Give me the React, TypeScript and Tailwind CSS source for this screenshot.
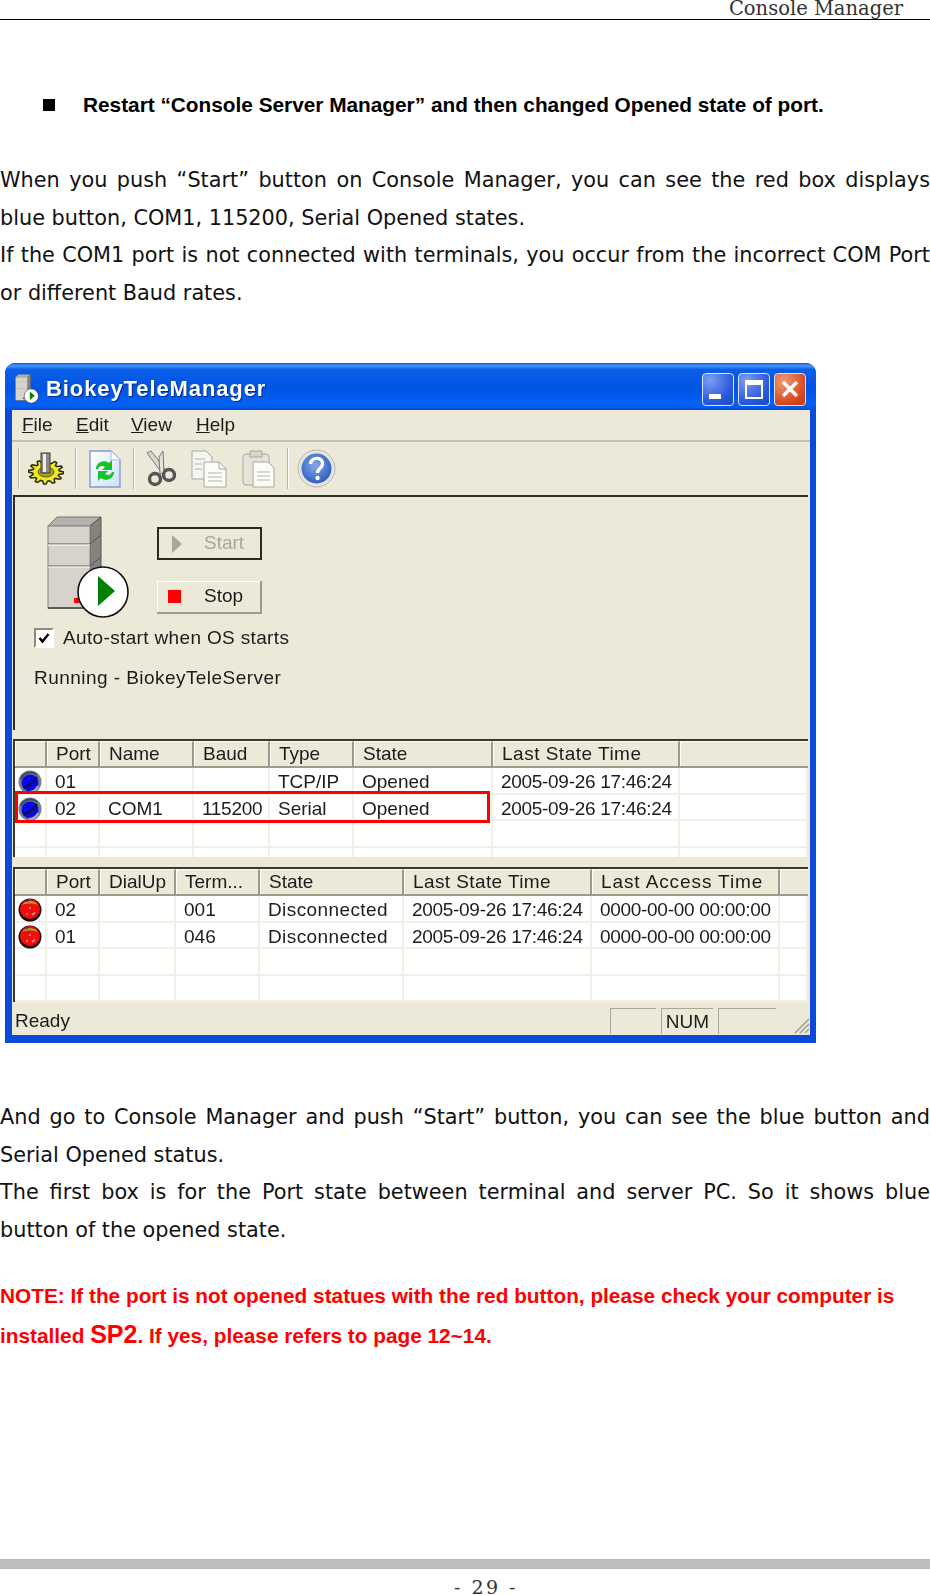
import type { ReactNode } from 'react'

const serif = 'font-["DejaVu_Serif","Liberation_Serif",serif]'
const panelFont = 'font-["Liberation_Sans",sans-serif]'

const ports = [
  { port: '01', name: '', baud: '', type: 'TCP/IP', state: 'Opened', time: '2005-09-26 17:46:24' },
  { port: '02', name: 'COM1', baud: '115200', type: 'Serial', state: 'Opened', time: '2005-09-26 17:46:24' }
]

const terms = [
  { port: '02', term: '001', state: 'Disconnected', last: '2005-09-26 17:46:24', access: '0000-00-00 00:00:00' },
  { port: '01', term: '046', state: 'Disconnected', last: '2005-09-26 17:46:24', access: '0000-00-00 00:00:00' }
]

const portCols = 'grid-cols-[32px_53px_94px_76px_84px_139px_187px_1fr]'
const termCols = 'grid-cols-[32px_53px_76px_84px_144px_188px_188px_1fr]'

// cog outline for the toolbar icon, squashed so it reads as seen from above
const cogPoints = Array.from({ length: 48 }, (_, i) => {
  const a = (i / 48) * Math.PI * 2
  const r = i % 4 < 2 ? 1 : 0.76
  return `${(18 + Math.cos(a) * 17.5 * r).toFixed(1)},${(20 + Math.sin(a) * 12 * r).toFixed(1)}`
}).join(' ')

const Gears = () => (
  <svg width="36" height="33" viewBox="0 0 36 33">
    <polygon points={cogPoints} fill="#f0ea20" stroke="#2c2c10" strokeWidth="1.5" />
    <ellipse cx="18" cy="20" rx="8" ry="5" fill="#a8a018" stroke="#55551a" />
    <rect x="13" y="1" width="9" height="20" fill="#8a8a86" stroke="#3c3c3c" />
    <rect x="15" y="2" width="3" height="18" fill="#ededed" />
  </svg>
)

const RefreshDoc = () => (
  <svg width="32" height="38" viewBox="0 0 32 38">
    <defs>
      <linearGradient id="docFill" x1="0" y1="0" x2="1" y2="1">
        <stop offset="0" stopColor="#ffffff" />
        <stop offset="1" stopColor="#cfe0fa" />
      </linearGradient>
    </defs>
    <path d="M1 1h21l9 9v27H1z" fill="url(#docFill)" stroke="#7d9bd0" strokeWidth="1.4" />
    <path d="M22 1v9h9" fill="#fff" stroke="#a8bce0" />
    <path d="M7 19c0-7 8-10 13-6l3-3v10h-10l3-3c-3-2-6-1-7 2z" fill="#14c428" />
    <path d="M25 22c0 7-8 10-13 6l-3 3V21h10l-3 3c3 2 6 1 7-2z" fill="#14c428" />
  </svg>
)

const Scissors = () => (
  <svg width="30" height="37" viewBox="0 0 30 37">
    <path d="M1 3l15 20 3-4L5 1z" fill="#d8d8d0" stroke="#777" />
    <path d="M17 1l1 22-4 1-1-17z" fill="#e4e4dc" stroke="#777" />
    <circle cx="9" cy="29" r="5.5" fill="none" stroke="#555" strokeWidth="3.4" />
    <circle cx="23" cy="25" r="5.5" fill="none" stroke="#555" strokeWidth="3.4" />
  </svg>
)

const Copy = () => (
  <svg width="36" height="38" viewBox="0 0 36 38">
    <path d="M1 1h14l6 6v22H1z" fill="#f4f4f0" stroke="#a8a8a0" />
    <path d="M13 12h15l7 7v18H13z" fill="#fbfbf8" stroke="#a8a8a0" />
    <path d="M28 12v7h7" fill="none" stroke="#a8a8a0" />
    <path d="M4 9h10M4 14h7M4 19h7M17 23h14M17 27h14M17 31h14" stroke="#b4b4ac" />
  </svg>
)

const Paste = () => (
  <svg width="33" height="38" viewBox="0 0 33 38">
    <rect x="1" y="4" width="26" height="31" rx="3" fill="#e6e4da" stroke="#a8a8a0" />
    <path d="M8 1h12v6H8z" fill="#d8d6cc" stroke="#a8a8a0" />
    <path d="M11 12h15l6 6v19H11z" fill="#fbfbf8" stroke="#a8a8a0" />
    <path d="M15 22h13M15 26h13M15 30h13" stroke="#b4b4ac" />
  </svg>
)

const Help = () => (
  <svg width="39" height="39" viewBox="0 0 39 39">
    <defs>
      <radialGradient id="helpFill" cx="45%" cy="40%" r="60%">
        <stop offset="0" stopColor="#86a8e8" />
        <stop offset="1" stopColor="#2f5fc0" />
      </radialGradient>
    </defs>
    <circle cx="19.5" cy="19.5" r="18.5" fill="#e4e4e0" stroke="#b8b8b0" />
    <circle cx="19.5" cy="19.5" r="15" fill="url(#helpFill)" />
    <path d="M13.5 15c1-8 13-7 12 0 0 4-5 4-5 9" fill="none" stroke="#fff" strokeWidth="3.4" />
    <circle cx="20.5" cy="29" r="2.2" fill="#fff" />
  </svg>
)

const Server = ({ size = 84 }: { size?: number }) => (
  <svg width={size} height={(size * 104) / 84} viewBox="0 0 84 104">
    <polygon points="2,11 11,2 55,2 44,11" fill="#b4b2ac" stroke="#77756e" />
    <polygon points="44,11 55,2 55,76 44,93" fill="#85837e" stroke="#55534e" />
    <rect x="2" y="11" width="42" height="82" fill="#d6d3cb" stroke="#86847d" />
    <path d="M2 29h42M2 51h42M44 29l11-9M44 51l11-9" stroke="#55534e" />
    <path d="M2 30h42M2 52h42" stroke="#fff" />
    <path d="M2 93h42l11-17" fill="none" stroke="#44423c" strokeWidth="1.6" />
    <rect x="28" y="83" width="6" height="5" fill="#ff0000" />
    <circle cx="57" cy="77" r="25" fill="#fff" stroke="#111" strokeWidth="1.6" />
    <polygon points="52,61 69,76 52,91" fill="#008000" />
  </svg>
)

const Orb = ({ color }: { color: 'blue' | 'red' }) =>
  color === 'blue' ? (
    <svg width="24" height="24" viewBox="0 0 24 24">
      <circle cx="12" cy="12" r="11.5" fill="#767e8a" />
      <path d="M3 9a10 10 0 0 1 16-4" fill="none" stroke="#3c4a5a" strokeWidth="2" />
      <circle cx="12" cy="13" r="8.5" fill="#0808e8" />
      <path d="M5 17c6 0 10-4 14-10" fill="none" stroke="#061060" strokeWidth="2.4" />
      <path d="M20 16a10 10 0 0 1-9 6" fill="none" stroke="#aab2b8" strokeWidth="2" />
    </svg>
  ) : (
    <svg width="24" height="24" viewBox="0 0 24 24">
      <circle cx="12" cy="12" r="11.5" fill="#1c0c0c" />
      <circle cx="12" cy="11" r="10" fill="#f40c0c" />
      <path d="M4 7a10 10 0 0 1 16 0c-5-2-11-2-16 0z" fill="#a8a020" />
      <path d="M7 2.5l3-1 1 1.5-3 1z" fill="#3030c0" />
      <circle cx="12" cy="10" r="1.1" fill="#e8a0a0" />
      <circle cx="9" cy="16" r="1" fill="#e8a0a0" />
      <path d="M14 17l3-2.5" stroke="#d8b0b0" strokeWidth="1.6" />
    </svg>
  )

const HeaderCell = ({ children, last }: { children?: ReactNode; last?: boolean }) => (
  <div
    className={`flex h-[25px] items-center border-t border-l border-t-[#fbfaf4] border-l-white bg-[#ece9d8] pb-[2px] pl-[8px] leading-none ${
      last ? '' : 'border-r-2 border-r-[#9d9a8a]'
    }`}
  >
    {children}
  </div>
)

const ToolSep = () => <div className="h-[41px] w-[2px] border-r border-l border-r-white border-l-[#b8b5a6]" />

const Row = ({ cols, cells }: { cols: string; cells: ReactNode[] }) => (
  <div className={`grid h-[26.6px] ${cols} border-b-2 border-b-[#f2f0e4] bg-white`}>
    {cells.map((c, i) => (
      <div
        key={i}
        className={`flex items-center border-r-2 border-r-[#f2f0e4] whitespace-nowrap ${
          i === 0 ? 'justify-center' : 'pl-[8px]'
        }`}
      >
        {c}
      </div>
    ))}
  </div>
)

const Digits = ({ children }: { children: ReactNode }) => <span className="tracking-[-0.3px]">{children}</span>

const CaptionButton = ({ children, close }: { children: ReactNode; close?: boolean }) => (
  <div
    className={`flex h-[33px] w-[32px] items-center justify-center rounded-[4px] border border-[#dce6fb] ${
      close
        ? 'bg-[radial-gradient(circle_at_30%_25%,#ee9a78,#d8471c_70%,#c23a10)]'
        : 'bg-[radial-gradient(circle_at_25%_20%,#7d9df0,#2a58dc_65%,#1c48c8)]'
    }`}
  >
    {children}
  </div>
)

const AppWindow = () => (
  <div
    className={`${panelFont} flex h-[680px] w-[811px] flex-col overflow-hidden rounded-t-[10px] bg-[#0b49d8] text-[19px] text-[#1c1c1c] blur-[0.4px]`}
  >
    {/* title bar */}
    <div className="flex h-[47px] shrink-0 items-center bg-[linear-gradient(180deg,#0a5ce0_0%,#4a93f8_6%,#0a5ee8_14%,#0054e3_55%,#0462f8_88%,#0250d8_100%)] pt-[5px] pr-[10px] pl-[10px]">
      <Server size={24} />
      <span className="mb-[2px] ml-[7px] text-[22px] font-bold tracking-[0.9px] text-white [text-shadow:1px_1px_0_#0a2a80]">
        BiokeyTeleManager
      </span>
      <div className="ml-auto flex gap-[4px]">
        <CaptionButton>
          <div className="mt-[15px] mr-[6px] h-[5px] w-[12px] bg-white" />
        </CaptionButton>
        <CaptionButton>
          <div className="h-[19px] w-[18px] border-[2px] border-t-[5px] border-white" />
        </CaptionButton>
        <CaptionButton close>
          <svg width="20" height="20" viewBox="0 0 20 20">
            <path d="M3 3l14 14M17 3L3 17" stroke="#fff" strokeWidth="3.4" />
          </svg>
        </CaptionButton>
      </div>
    </div>

    {/* client area */}
    <div className="mr-[6px] mb-[8px] ml-[7px] flex min-h-0 flex-1 flex-col bg-[#ece9d8]">
      <div className="flex h-[32px] shrink-0 items-center border-b-2 border-b-[#c4c2b6] pl-[10px]">
        <span className="w-[54px]">
          <span className="underline">F</span>ile
        </span>
        <span className="w-[55px]">
          <span className="underline">E</span>dit
        </span>
        <span className="w-[65px]">
          <span className="underline">V</span>iew
        </span>
        <span>
          <span className="underline">H</span>elp
        </span>
      </div>

      <div className="flex h-[53px] shrink-0 items-center pl-[6px]">
        <ToolSep />
        <div className="ml-[8px] flex w-[47px]">
          <Gears />
        </div>
        <ToolSep />
        <div className="ml-[12px] w-[44px]">
          <RefreshDoc />
        </div>
        <ToolSep />
        <div className="ml-[11px] flex w-[141px] gap-[15px]">
          <Scissors />
          <Copy />
          <Paste />
        </div>
        <ToolSep />
        <div className="ml-[8px]">
          <Help />
        </div>
      </div>

      {/* service panel */}
      <div className="mr-[2px] ml-[1px] flex h-[235px] shrink-0 flex-col border-t-2 border-l-2 border-t-[#2f2e28] border-l-[#2f2e28] pl-[19px]">
        <div className="mt-[18px] flex h-[99px]">
          <div className="ml-[12px] w-[111px]">
            <Server />
          </div>
          <div className="mt-[12px] flex flex-col gap-[21px]">
            <div className="flex h-[33px] w-[105px] items-center border-2 border-[#2a2a24] bg-[#ece9d8] pl-[12px] text-[#a9a799]">
              <svg width="12" height="20" viewBox="0 0 12 20">
                <polygon points="1,1 11,10 1,19" fill="#a9a799" />
              </svg>
              <span className="ml-[21px]">Start</span>
            </div>
            <div className="flex h-[33px] w-[105px] items-center border-r-2 border-b-2 border-r-[#9d9a8a] border-b-[#9d9a8a] bg-[#ece9d8] pl-[11px] shadow-[inset_1px_1px_0_#fff]">
              <div className="h-[13px] w-[13px] bg-[#ff0000]" />
              <span className="ml-[23px]">Stop</span>
            </div>
          </div>
        </div>
        <div className="mt-[10px] flex items-center">
          <div className="flex h-[20px] w-[20px] items-center justify-center border-2 border-t-[#8e8c7e] border-r-white border-b-white border-l-[#8e8c7e] bg-white">
            <svg width="12" height="12" viewBox="0 0 12 12">
              <path d="M1.5 6l3 3.5L10.5 2" fill="none" stroke="#000" strokeWidth="2.4" />
            </svg>
          </div>
          <span className="ml-[9px] tracking-[0.35px]">Auto-start when OS starts</span>
        </div>
        <div className="mt-[11px] tracking-[0.45px]">Running - BiokeyTeleServer</div>
      </div>

      {/* port list */}
      <div className="relative mt-[9px] mr-[2px] ml-[1px] h-[118px] shrink-0 overflow-hidden border-t-2 border-l-2 border-t-[#3a3930] border-l-[#3a3930]">
        <div className={`grid ${portCols} border-b-2 border-b-[#9d9a8a] bg-[#ece9d8]`}>
          <HeaderCell />
          <HeaderCell>Port</HeaderCell>
          <HeaderCell>Name</HeaderCell>
          <HeaderCell>Baud</HeaderCell>
          <HeaderCell>Type</HeaderCell>
          <HeaderCell>State</HeaderCell>
          <HeaderCell>
            <span className="tracking-[0.5px]">Last State Time</span>
          </HeaderCell>
          <HeaderCell last />
        </div>
        {ports.map((p) => (
          <Row
            key={p.port}
            cols={portCols}
            cells={[
              <Orb color="blue" />,
              p.port,
              p.name,
              <Digits>{p.baud}</Digits>,
              p.type,
              p.state,
              <Digits>{p.time}</Digits>,
              ''
            ]}
          />
        ))}
        <Row cols={portCols} cells={['', '', '', '', '', '', '', '']} />
        <div className={`grid h-[10px] ${portCols} bg-white`}>
          {['a', 'b', 'c', 'd', 'e', 'f', 'g', 'h'].map((k) => (
            <div key={k} className="border-r-2 border-r-[#f2f0e4]" />
          ))}
        </div>
        <div className="absolute top-[50px] left-0 h-[32px] w-[475px] border-[3px] border-[#ff0000]" />
      </div>

      {/* terminal list */}
      <div className="mt-[10px] mr-[2px] ml-[1px] h-[135px] shrink-0 overflow-hidden border-t-2 border-l-2 border-t-[#3a3930] border-l-[#3a3930]">
        <div className={`grid ${termCols} border-b-2 border-b-[#9d9a8a] bg-[#ece9d8]`}>
          <HeaderCell />
          <HeaderCell>Port</HeaderCell>
          <HeaderCell>DialUp</HeaderCell>
          <HeaderCell>Term...</HeaderCell>
          <HeaderCell>State</HeaderCell>
          <HeaderCell>
            <span className="tracking-[0.4px]">Last State Time</span>
          </HeaderCell>
          <HeaderCell>
            <span className="tracking-[0.9px]">Last Access Time</span>
          </HeaderCell>
          <HeaderCell last />
        </div>
        {terms.map((t) => (
          <Row
            key={t.port}
            cols={termCols}
            cells={[
              <Orb color="red" />,
              t.port,
              '',
              t.term,
              <span className="tracking-[0.4px]">{t.state}</span>,
              <Digits>{t.last}</Digits>,
              <Digits>{t.access}</Digits>,
              ''
            ]}
          />
        ))}
        <Row cols={termCols} cells={['', '', '', '', '', '', '', '']} />
        <Row cols={termCols} cells={['', '', '', '', '', '', '', '']} />
      </div>

      {/* status bar */}
      <div className="flex min-h-0 flex-1 items-end pb-[1px] pl-[3px]">
        <span className="mb-[2px] leading-[22px]">Ready</span>
        <div className="ml-auto flex items-end gap-[5px]">
          <div className="h-[26px] w-[46px] border-t border-l border-t-[#aaa899] border-l-[#aaa899]" />
          <div className="flex h-[26px] w-[52px] items-center justify-center border-t border-l border-t-[#aaa899] border-l-[#aaa899] leading-none">
            NUM
          </div>
          <div className="h-[26px] w-[58px] border-t border-l border-t-[#aaa899] border-l-[#aaa899]" />
          <svg className="ml-[10px]" width="19" height="19" viewBox="0 0 19 19">
            <path d="M18 4L4 18M18 9l-9 9M18 14l-4 4" stroke="#a5a395" strokeWidth="1.6" />
          </svg>
        </div>
      </div>
    </div>
  </div>
)

export default function App() {
  return (
    <div className='flex h-[1595px] w-[930px] flex-col bg-white font-["DejaVu_Sans",sans-serif] text-[#111]'>
      <div className={`${serif} h-[20px] shrink-0 border-b border-b-black pr-[27px] text-right text-[19.5px] leading-[17px] text-[#333]`}>
        Console Manager
      </div>

      <div className='mt-[72px] flex shrink-0 items-center font-["Liberation_Sans",sans-serif] text-[20.8px] leading-[26px] font-bold text-black'>
        <div className="mr-[28px] ml-[43px] h-[12px] w-[12px] bg-black" />
        Restart “Console Server Manager” and then changed Opened state of port.
      </div>

      <div className="mt-[44px] shrink-0 text-[20.8px] leading-[37.5px]">
        <p className="text-justify">When you push “Start” button on Console Manager, you can see the red box displays blue button, COM1, 115200, Serial Opened states.</p>
        <p className="text-justify">If the COM1 port is not connected with terminals, you occur from the incorrect COM Port or different Baud rates.</p>
      </div>

      <div className="mt-[51px] ml-[5px] shrink-0">
        <AppWindow />
      </div>

      <div className="mt-[56px] shrink-0 text-[20.8px] leading-[37.5px]">
        <p className="text-justify">And go to Console Manager and push “Start” button, you can see the blue button and Serial Opened status.</p>
        <p className="text-justify">The first box is for the Port state between terminal and server PC. So it shows blue button of the opened state.</p>
      </div>

      <div className='mt-[27px] shrink-0 font-["Liberation_Sans",sans-serif] text-[20.8px] leading-[40px] font-bold text-[#ff0000]'>
        <p>NOTE: If the port is not opened statues with the red button, please check your computer is</p>
        <p>
          installed <span className="text-[25px] leading-none">SP2</span>. If yes, please refers to page 12~14.
        </p>
      </div>

      <div className="mt-auto h-[10px] shrink-0 bg-[#bdbdbd]" />
      <div className={`${serif} h-[26px] shrink-0 pl-[42px] text-center text-[19px] leading-[36px] tracking-[2.5px] text-[#333]`}>- 29 -</div>
    </div>
  )
}
